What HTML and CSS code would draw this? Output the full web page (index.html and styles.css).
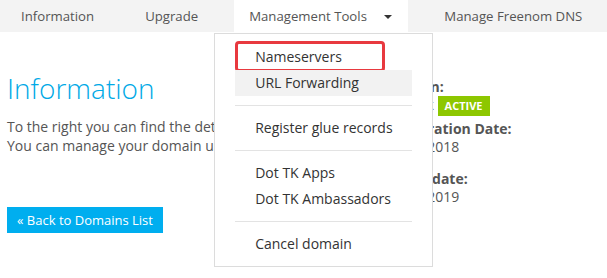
FILE: index.html
```html
<!DOCTYPE html>
<html>

<head>
	<title>Domain Information</title>
	<link rel="stylesheet" href="styles.css">
</head>

<body>
	<ul class="tabs">
		<li class="tab">Information</li>
		<li class="tab">Upgrade</li>
		<li class="tab active">
			Management Tools <span class="caret"></span>
			<ul class="dropdown">
				<li class="item marked">Nameservers<span class="mark"></span></li>
				<li class="item hover">URL Forwarding</li>
				<li class="divider"></li>
				<li class="item">Register glue records</li>
				<li class="divider"></li>
				<li class="item">Dot TK Apps</li>
				<li class="item">Dot TK Ambassadors</li>
				<li class="divider"></li>
				<li class="item">Cancel domain</li>
			</ul>
		</li>
		<li class="tab">Manage Freenom DNS</li>
	</ul>

	<div class="main">
		<div class="left">
			<h1 class="title">Information</h1>
			<p class="intro">To the right you can find the details of your domain.<br>
				You can manage your domain using the tabs above.</p>
			<a class="back" href="#">&laquo; Back to Domains List</a>
		</div>
		<div class="right">
			<div class="label">Domain:</div>
			<div class="value status">mine.tk <span class="badge">ACTIVE</span></div>
			<div class="label">Registration Date:</div>
			<div class="value">07/03/2018</div>
			<div class="label gap">Expiry date:</div>
			<div class="value">07/03/2019</div>
		</div>
	</div>
</body>

</html>
```

FILE: styles.css
```css
* {
	margin: 0px;
	padding: 0px;
	box-sizing: border-box;
}

html,
body {
	min-height: 100%;
}

body {
	min-height: 100vh;
	font-family: "Open Sans", "Liberation Sans", sans-serif;
	background: #fff;
	color: #555;
}

ul {
	list-style: none;
}

.tabs {
	display: flex;
	gap: 21px;
	height: 32px;
	padding-left: 6px;
	background: #f3f3f3;
}

.tab {
	position: relative;
	padding: 0 15px;
	font-size: 13.2px;
	line-height: 32px;
	color: #555;
	white-space: nowrap;
}

.tab.active {
	background: #fff;
	padding-right: 16px;
}

.caret {
	display: inline-block;
	width: 0;
	height: 0;
	margin-left: 14px;
	vertical-align: middle;
	border-left: 4px solid transparent;
	border-right: 4px solid transparent;
	border-top: 4px solid #333;
}

.dropdown {
	position: absolute;
	top: 33px;
	left: -20px;
	width: 219px;
	padding: 10px 20px 9px;
	background: #fff;
	border: 1px solid #dcdcdc;
	z-index: 5;
}

.item {
	position: relative;
	padding: 0 20px;
	font-size: 14px;
	line-height: 26px;
	color: #333;
	white-space: nowrap;
}

.item.hover {
	background: #f2f2f2;
}

.mark {
	position: absolute;
	left: 0;
	top: -3px;
	width: 150px;
	height: 31px;
	border: 3px solid #e8393f;
	border-radius: 4px;
}

.divider {
	height: 1px;
	margin: 9px 0;
	background: #e3e3e3;
}

.main {
	display: flex;
}

.left {
	flex: 0 0 378px;
	padding-left: 7px;
}

.title {
	margin-top: 39px;
	font-size: 28px;
	font-weight: 300;
	line-height: 34px;
	color: #00a9e6;
}

.intro {
	margin-top: 12px;
	font-size: 14px;
	line-height: 19px;
	color: #555;
	white-space: nowrap;
}

.back {
	display: inline-block;
	margin-top: 52px;
	height: 26px;
	padding: 0 10px;
	font-size: 13px;
	line-height: 26px;
	color: #fff;
	background: #00aeef;
	text-decoration: none;
}

.right {
	padding-top: 46px;
	padding-left: 7px;
	font-size: 14px;
	line-height: 18px;
}

.label {
	font-weight: bold;
	color: #555;
}

.label.gap {
	margin-top: 14px;
}

.value {
	color: #555;
}

.value.status {
	height: 24px;
}

.badge {
	display: inline-block;
	height: 20px;
	padding: 0 7px;
	font-size: 11px;
	font-weight: bold;
	line-height: 20px;
	color: #fff;
	background: #8dc700;
	vertical-align: top;
}
```
